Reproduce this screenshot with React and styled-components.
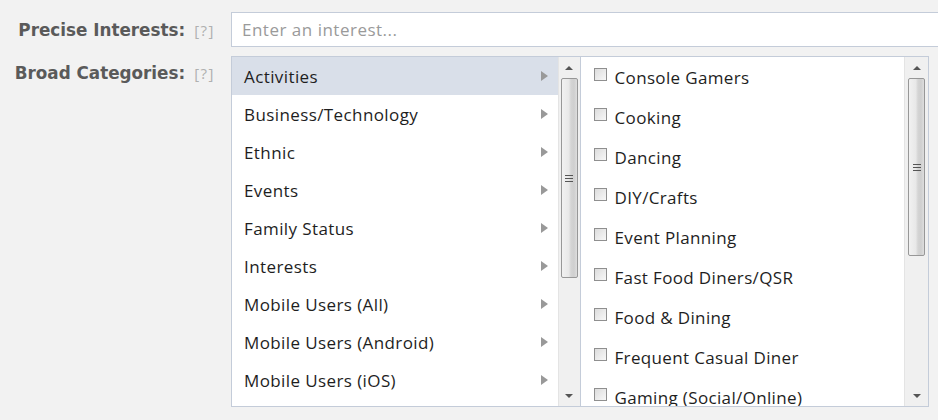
import React from "react";
import styled, { createGlobalStyle } from "styled-components";

const GlobalStyle = createGlobalStyle`
  html, body {
    margin: 0;
    padding: 0;
    background: #f2f2f2;
    font-family: "Open Sans", "Noto Sans", sans-serif;
  }
`;

const Page = styled.div`
  width: 938px;
  height: 420px;
  overflow: hidden;
  padding-top: 12px;
  box-sizing: border-box;
  display: flex;
  flex-direction: column;
  gap: 9px;
`;

const FieldRow = styled.div`
  display: grid;
  grid-template-columns: 231px 1fr;
  align-items: start;
`;

const Label = styled.div`
  display: flex;
  justify-content: flex-end;
  align-items: baseline;
  gap: 9px;
  padding-right: 16px;
  padding-top: ${({ $top }) => $top}px;
  font-family: "DejaVu Sans", "Open Sans", sans-serif;
  font-size: 16.8px;
  font-weight: 700;
  color: #5a5a5a;
  white-space: nowrap;
`;

const Help = styled.span`
  font-family: "Open Sans", sans-serif;
  font-size: 15px;
  font-weight: 400;
  color: #b0b0b0;
  letter-spacing: 1.5px;
`;

const Input = styled.input`
  height: 35px;
  box-sizing: border-box;
  width: 720px;
  border: 1px solid #c4ccd9;
  background: #fff;
  padding: 0 10px;
  font-family: inherit;
  font-size: 17px;
  letter-spacing: 0.5px;
  color: #333;
  outline: none;
  &::placeholder {
    color: #9a9a9a;
  }
`;

const Box = styled.div`
  width: 698px;
  height: 351px;
  box-sizing: border-box;
  border: 1px solid #c4ccd9;
  background: #fff;
  display: flex;
`;

const Panel = styled.div`
  flex: 1;
  display: flex;
  min-width: 0;
  & + & {
    border-left: 1px solid #c4ccd9;
  }
`;

const List = styled.div`
  flex: 1;
  overflow: hidden;
`;

const CatRow = styled.div`
  height: 38px;
  display: flex;
  align-items: center;
  justify-content: space-between;
  padding: 0 10px 0 12px;
  font-size: 17px;
  letter-spacing: 0.4px;
  color: #1e1e1e;
  background: ${({ $active }) => ($active ? "#d9dfe9" : "transparent")};
`;

const Arrow = styled.span`
  width: 0;
  height: 0;
  border-top: 5px solid transparent;
  border-bottom: 5px solid transparent;
  border-left: 7px solid #999;
`;

const CheckRow = styled.label`
  height: 40px;
  display: flex;
  align-items: center;
  gap: 8px;
  padding-left: 13px;
  font-size: 17px;
  letter-spacing: 0.35px;
  color: #1e1e1e;
`;

const Check = styled.span`
  width: 11px;
  height: 11px;
  border: 1px solid #8f8f8f;
  background: linear-gradient(135deg, #dcdcdc, #f8f8f8);
  margin-top: -6px;
  flex-shrink: 0;
`;

const Scroll = styled.div`
  width: ${({ $w }) => $w}px;
  display: flex;
  flex-direction: column;
  align-items: center;
  background: #f0f0f0;
  border-left: 1px solid #e4e4e4;
`;

const ScrollBtn = styled.div`
  height: 21px;
  width: 100%;
  display: flex;
  align-items: center;
  justify-content: center;
  &::after {
    content: "";
    border-left: 4px solid transparent;
    border-right: 4px solid transparent;
    ${({ $down }) =>
      $down ? "border-top: 4px solid #555;" : "border-bottom: 4px solid #555;"}
  }
`;

const Thumb = styled.div`
  width: 17px;
  height: ${({ $h }) => $h}px;
  box-sizing: border-box;
  border: 1px solid #979797;
  border-radius: 2px;
  background: linear-gradient(90deg, #f1f1f1 0%, #e8e8e8 45%, #d4d4d4 60%, #cfcfcf 80%, #dedede 100%);
  display: flex;
  align-items: center;
  justify-content: center;
`;

const Grip = styled.div`
  width: 8px;
  height: 7px;
  background: repeating-linear-gradient(180deg, #555 0 1px, transparent 1px 3px);
`;

const Spacer = styled.div`
  flex: 1;
`;

const ScrollBar = ({ w, h }) => (
  <Scroll $w={w}>
    <ScrollBtn />
    <Thumb $h={h}>
      <Grip />
    </Thumb>
    <Spacer />
    <ScrollBtn $down />
  </Scroll>
);

const categories = [
  "Activities",
  "Business/Technology",
  "Ethnic",
  "Events",
  "Family Status",
  "Interests",
  "Mobile Users (All)",
  "Mobile Users (Android)",
  "Mobile Users (iOS)",
];

const activities = [
  "Console Gamers",
  "Cooking",
  "Dancing",
  "DIY/Crafts",
  "Event Planning",
  "Fast Food Diners/QSR",
  "Food & Dining",
  "Frequent Casual Diner",
  "Gaming (Social/Online)",
];

export default function App() {
  return (
    <>
      <GlobalStyle />
      <Page>
        <FieldRow>
          <Label $top={8}>
            Precise Interests: <Help>[?]</Help>
          </Label>
          <Input placeholder="Enter an interest..." />
        </FieldRow>
        <FieldRow>
          <Label $top={7}>
            Broad Categories: <Help>[?]</Help>
          </Label>
          <Box>
            <Panel>
              <List>
                {categories.map((c, i) => (
                  <CatRow key={c} $active={i === 0}>
                    {c}
                    <Arrow />
                  </CatRow>
                ))}
              </List>
              <ScrollBar w={21} h={200} />
            </Panel>
            <Panel>
              <List>
                {activities.map((a) => (
                  <CheckRow key={a}>
                    <Check />
                    {a}
                  </CheckRow>
                ))}
              </List>
              <ScrollBar w={23} h={178} />
            </Panel>
          </Box>
        </FieldRow>
      </Page>
    </>
  );
}
